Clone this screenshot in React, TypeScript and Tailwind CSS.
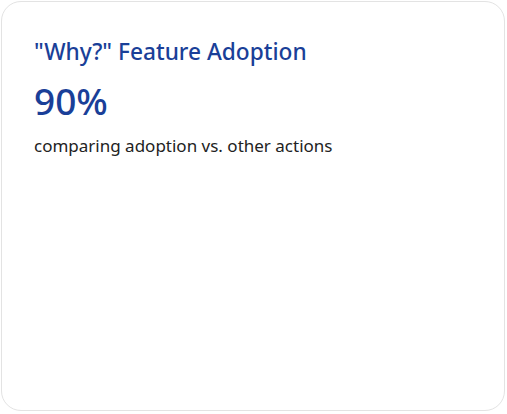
export default function App() {
  return (
    <div className="w-[507px] h-[414px] bg-white p-px" style={{ fontFamily: '"Noto Sans", "Open Sans", sans-serif' }}>
      <div className="h-[410px] w-[504px] rounded-[20px] border border-[#e3e3e3] bg-white px-[32px] pt-[35px]">
        <h2 className="text-[22.7px] leading-[30px] font-medium text-[#1a3f98]">"Why?" Feature Adoption</h2>
        <div className="mt-[13px] text-[37px] leading-[42px] font-medium text-[#1a3f98]">90%</div>
        <p className="mt-[13px] text-[17px] leading-[22px] text-[#222]">comparing adoption vs. other actions</p>
      </div>
    </div>
  );
}
